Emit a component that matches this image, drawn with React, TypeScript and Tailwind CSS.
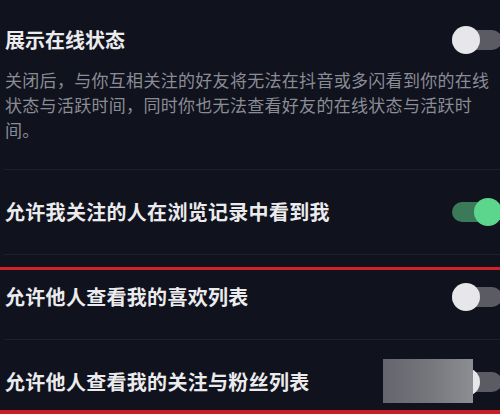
import { useState } from "react";

type ToggleProps = {
  on: boolean;
  onChange: () => void;
};

function Toggle({ on, onChange }: ToggleProps) {
  return (
    <button
      type="button"
      onClick={onChange}
      className={`relative -mr-[2px] h-[20px] w-[50px] shrink-0 rounded-full ${
        on ? "bg-[#3b7a58]" : "bg-[#5b5c63]"
      }`}
    >
      <span
        className={`absolute top-1/2 h-[28px] w-[28px] -translate-y-1/2 rounded-full ${
          on ? "right-0 bg-[#5dd68d]" : "left-0 bg-[#e7e7eb]"
        }`}
      />
    </button>
  );
}

const DESC_LINES = [
  "关闭后，与你互相关注的好友将无法在抖音或多闪看到你的在线",
  "状态与活跃时间，同时你也无法查看好友的在线状态与活跃时",
  "间。",
];

export default function App() {
  const [online, setOnline] = useState(false);
  const [history, setHistory] = useState(true);
  const [likes, setLikes] = useState(false);
  const [follows, setFollows] = useState(false);

  return (
    <div className="relative h-[414px] w-[500px] overflow-hidden bg-[#10121d] font-['Noto_Sans_CJK_SC','Noto_Sans',sans-serif] text-[#ebebee]">
      <div className="ml-[4px] h-[170px] border-b border-[#1d1f29] pl-[1px] pt-[26px]">
        <div className="flex h-[28px] items-center justify-between">
          <span className="text-[20px] font-semibold leading-[28px]">
            展示在线状态
          </span>
          <Toggle on={online} onChange={() => setOnline(!online)} />
        </div>
        <div className="mt-[13px] text-[17px] leading-[25px] tracking-[0.3px] text-[#8b8c95]">
          {DESC_LINES.map((line) => (
            <div key={line} className="whitespace-nowrap">
              {line}
            </div>
          ))}
        </div>
      </div>

      <Row
        label="允许我关注的人在浏览记录中看到我"
        on={history}
        onChange={() => setHistory(!history)}
      />
      <Row
        label="允许他人查看我的喜欢列表"
        on={likes}
        onChange={() => setLikes(!likes)}
      />
      <Row
        label="允许他人查看我的关注与粉丝列表"
        on={follows}
        onChange={() => setFollows(!follows)}
      />

      {/* annotation marks over the screenshot */}
      <div className="absolute left-0 top-[267px] h-[3px] w-full bg-[#d3202b]" />
      <div className="absolute left-0 top-[410px] h-[4px] w-full bg-[#c81e28]" />
      <div className="absolute left-[383px] top-[359px] h-[44px] w-[90px] bg-gradient-to-r from-[#65666d] via-[#75767c] to-[#8d8e93]" />
    </div>
  );
}

function Row({
  label,
  on,
  onChange,
}: {
  label: string;
  on: boolean;
  onChange: () => void;
}) {
  return (
    <div className="ml-[4px] flex h-[85px] items-center justify-between border-b border-[#1d1f29] pl-[1px]">
      <span className="text-[20px] font-semibold tracking-[0.3px]">{label}</span>
      <Toggle on={on} onChange={onChange} />
    </div>
  );
}
